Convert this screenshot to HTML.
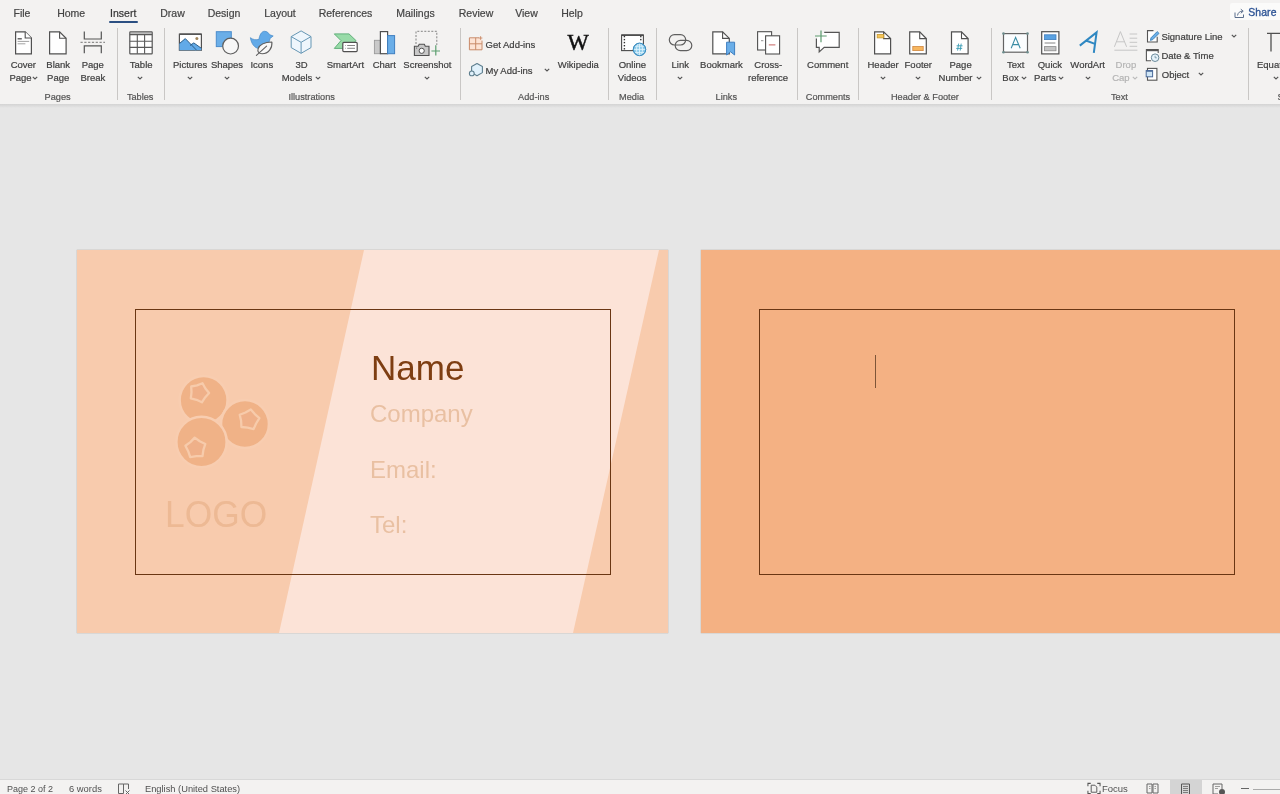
<!DOCTYPE html>
<html><head><meta charset="utf-8">
<style>
*{margin:0;padding:0;box-sizing:border-box}
html,body{width:1280px;height:794px;overflow:hidden;background:#e6e6e6;font-family:"Liberation Sans",sans-serif;color:#444}
.a{position:absolute}
.t{position:absolute;line-height:12px;text-align:center;white-space:nowrap;-webkit-text-stroke:0.2px currentColor}
.tl{position:absolute;line-height:12px;white-space:nowrap;-webkit-text-stroke:0.2px currentColor}
#ribbon{position:absolute;left:0;top:0;width:1280px;height:104px;background:#f3f2f1;overflow:hidden;will-change:transform}
#shadow{position:absolute;left:0;top:104px;width:1280px;height:4px;background:linear-gradient(#d3d3d3,#e6e6e6)}
</style></head><body>
<div id="ribbon">
<div class="t" style="left:-38.0px;top:6.86px;width:120px;font-size:10.5px;color:#444;">File</div>
<div class="t" style="left:11.2px;top:6.86px;width:120px;font-size:10.5px;color:#444;">Home</div>
<div class="t" style="left:63.2px;top:6.86px;width:120px;font-size:10.5px;color:#333;">Insert</div>
<div class="t" style="left:112.5px;top:6.86px;width:120px;font-size:10.5px;color:#444;">Draw</div>
<div class="t" style="left:164.0px;top:6.86px;width:120px;font-size:10.5px;color:#444;">Design</div>
<div class="t" style="left:220.0px;top:6.86px;width:120px;font-size:10.5px;color:#444;">Layout</div>
<div class="t" style="left:285.5px;top:6.86px;width:120px;font-size:10.5px;color:#444;">References</div>
<div class="t" style="left:355.5px;top:6.86px;width:120px;font-size:10.5px;color:#444;">Mailings</div>
<div class="t" style="left:416.0px;top:6.86px;width:120px;font-size:10.5px;color:#444;">Review</div>
<div class="t" style="left:466.5px;top:6.86px;width:120px;font-size:10.5px;color:#444;">View</div>
<div class="t" style="left:512.0px;top:6.86px;width:120px;font-size:10.5px;color:#444;">Help</div>
<div class="a" style="left:109px;top:20.5px;width:29px;height:2px;background:#2b4f82;border-radius:1px"></div>
<div class="a" style="left:1230px;top:3px;width:52px;height:17px;background:#fbfbfa;border-radius:2px"></div>
<svg class="a" style="left:1234px;top:8px" width="11" height="10" viewBox="0 0 11 10"><path d="M1 4.5 V9.5 H9.5 V6.5" fill="none" stroke="#5a6e8c" stroke-width="1"/><path d="M3.5 7.5 C4 4.5 6 3.2 8.5 3.2 M6.8 1.2 L9.2 3.2 L6.8 5.2" fill="none" stroke="#5a6e8c" stroke-width="1"/></svg>
<div class="tl" style="left:1248.3px;top:7.00px;font-size:10.4px;color:#2f5596;-webkit-text-stroke:0.35px #2f5596;letter-spacing:0.1px;">Share</div>
<div class="a" style="left:116.5px;top:28px;width:1px;height:72px;background:#c9c7c5"></div>
<div class="a" style="left:164px;top:28px;width:1px;height:72px;background:#c9c7c5"></div>
<div class="a" style="left:460px;top:28px;width:1px;height:72px;background:#c9c7c5"></div>
<div class="a" style="left:608.2px;top:28px;width:1px;height:72px;background:#c9c7c5"></div>
<div class="a" style="left:656px;top:28px;width:1px;height:72px;background:#c9c7c5"></div>
<div class="a" style="left:796.6px;top:28px;width:1px;height:72px;background:#c9c7c5"></div>
<div class="a" style="left:858.4px;top:28px;width:1px;height:72px;background:#c9c7c5"></div>
<div class="a" style="left:991.3px;top:28px;width:1px;height:72px;background:#c9c7c5"></div>
<div class="a" style="left:1248.2px;top:28px;width:1px;height:72px;background:#c9c7c5"></div>
<div class="t" style="left:-36.7px;top:59.01px;width:120px;font-size:9.5px;color:#3e3e3e;">Cover</div>
<div class="t" style="left:-39.5px;top:71.71px;width:120px;font-size:9.5px;color:#3e3e3e;">Page</div>
<svg class="a" style="left:32.3px;top:75.7px" width="6" height="4"><path d="M0.8 0.8 L3 3 L5.2 0.8" fill="none" stroke="#555" stroke-width="1.15"/></svg>
<div class="t" style="left:-1.8px;top:59.01px;width:120px;font-size:9.5px;color:#3e3e3e;">Blank</div>
<div class="t" style="left:-1.8px;top:71.71px;width:120px;font-size:9.5px;color:#3e3e3e;">Page</div>
<div class="t" style="left:32.8px;top:59.01px;width:120px;font-size:9.5px;color:#3e3e3e;">Page</div>
<div class="t" style="left:32.8px;top:71.71px;width:120px;font-size:9.5px;color:#3e3e3e;">Break</div>
<div class="t" style="left:-2.4px;top:91.41px;width:120px;font-size:9.2px;color:#555;">Pages</div>
<div class="t" style="left:81.2px;top:59.01px;width:120px;font-size:9.5px;color:#3e3e3e;">Table</div>
<svg class="a" style="left:137.2px;top:75.5px" width="6" height="4"><path d="M0.8 0.8 L3 3 L5.2 0.8" fill="none" stroke="#555" stroke-width="1.15"/></svg>
<div class="t" style="left:80.2px;top:91.41px;width:120px;font-size:9.2px;color:#555;">Tables</div>
<div class="t" style="left:130.2px;top:59.01px;width:120px;font-size:9.5px;color:#3e3e3e;">Pictures</div>
<svg class="a" style="left:187.1px;top:75.5px" width="6" height="4"><path d="M0.8 0.8 L3 3 L5.2 0.8" fill="none" stroke="#555" stroke-width="1.15"/></svg>
<div class="t" style="left:167.0px;top:59.01px;width:120px;font-size:9.5px;color:#3e3e3e;">Shapes</div>
<svg class="a" style="left:223.7px;top:75.5px" width="6" height="4"><path d="M0.8 0.8 L3 3 L5.2 0.8" fill="none" stroke="#555" stroke-width="1.15"/></svg>
<div class="t" style="left:201.8px;top:59.01px;width:120px;font-size:9.5px;color:#3e3e3e;">Icons</div>
<div class="t" style="left:241.5px;top:59.01px;width:120px;font-size:9.5px;color:#3e3e3e;">3D</div>
<div class="t" style="left:237.0px;top:71.71px;width:120px;font-size:9.5px;color:#3e3e3e;">Models</div>
<svg class="a" style="left:315.3px;top:75.7px" width="6" height="4"><path d="M0.8 0.8 L3 3 L5.2 0.8" fill="none" stroke="#555" stroke-width="1.15"/></svg>
<div class="t" style="left:285.4px;top:59.01px;width:120px;font-size:9.5px;color:#3e3e3e;">SmartArt</div>
<div class="t" style="left:324.3px;top:59.01px;width:120px;font-size:9.5px;color:#3e3e3e;">Chart</div>
<div class="t" style="left:367.4px;top:59.01px;width:120px;font-size:9.5px;color:#3e3e3e;">Screenshot</div>
<svg class="a" style="left:423.9px;top:75.5px" width="6" height="4"><path d="M0.8 0.8 L3 3 L5.2 0.8" fill="none" stroke="#555" stroke-width="1.15"/></svg>
<div class="t" style="left:251.7px;top:91.41px;width:120px;font-size:9.2px;color:#555;">Illustrations</div>
<div class="tl" style="left:485.6px;top:38.61px;font-size:9.5px;color:#3e3e3e;">Get Add-ins</div>
<div class="tl" style="left:485.6px;top:64.51px;font-size:9.5px;color:#3e3e3e;">My Add-ins</div>
<svg class="a" style="left:544.1px;top:68.2px" width="6" height="4"><path d="M0.8 0.8 L3 3 L5.2 0.8" fill="none" stroke="#555" stroke-width="1.15"/></svg>
<div class="t" style="left:518.3px;top:59.21px;width:120px;font-size:9.5px;color:#3e3e3e;">Wikipedia</div>
<div class="t" style="left:473.7px;top:91.41px;width:120px;font-size:9.2px;color:#555;">Add-ins</div>
<div class="t" style="left:572.4px;top:59.01px;width:120px;font-size:9.5px;color:#3e3e3e;">Online</div>
<div class="t" style="left:572.2px;top:71.71px;width:120px;font-size:9.5px;color:#3e3e3e;">Videos</div>
<div class="t" style="left:571.6px;top:91.41px;width:120px;font-size:9.2px;color:#555;">Media</div>
<div class="t" style="left:620.3px;top:59.01px;width:120px;font-size:9.5px;color:#3e3e3e;">Link</div>
<svg class="a" style="left:676.7px;top:75.5px" width="6" height="4"><path d="M0.8 0.8 L3 3 L5.2 0.8" fill="none" stroke="#555" stroke-width="1.15"/></svg>
<div class="t" style="left:661.5px;top:59.01px;width:120px;font-size:9.5px;color:#3e3e3e;">Bookmark</div>
<div class="t" style="left:708.3px;top:59.01px;width:120px;font-size:9.5px;color:#3e3e3e;">Cross-</div>
<div class="t" style="left:708.1px;top:71.71px;width:120px;font-size:9.5px;color:#3e3e3e;">reference</div>
<div class="t" style="left:666.3px;top:91.41px;width:120px;font-size:9.2px;color:#555;">Links</div>
<div class="t" style="left:767.7px;top:59.01px;width:120px;font-size:9.5px;color:#3e3e3e;">Comment</div>
<div class="t" style="left:768.0px;top:91.41px;width:120px;font-size:9.2px;color:#555;">Comments</div>
<div class="t" style="left:823.1px;top:59.01px;width:120px;font-size:9.5px;color:#3e3e3e;">Header</div>
<svg class="a" style="left:879.7px;top:75.5px" width="6" height="4"><path d="M0.8 0.8 L3 3 L5.2 0.8" fill="none" stroke="#555" stroke-width="1.15"/></svg>
<div class="t" style="left:858.3px;top:59.01px;width:120px;font-size:9.5px;color:#3e3e3e;">Footer</div>
<svg class="a" style="left:915px;top:75.5px" width="6" height="4"><path d="M0.8 0.8 L3 3 L5.2 0.8" fill="none" stroke="#555" stroke-width="1.15"/></svg>
<div class="t" style="left:900.6px;top:59.01px;width:120px;font-size:9.5px;color:#3e3e3e;">Page</div>
<div class="t" style="left:895.5px;top:71.71px;width:120px;font-size:9.5px;color:#3e3e3e;">Number</div>
<svg class="a" style="left:975.7px;top:75.7px" width="6" height="4"><path d="M0.8 0.8 L3 3 L5.2 0.8" fill="none" stroke="#555" stroke-width="1.15"/></svg>
<div class="t" style="left:864.9px;top:91.41px;width:120px;font-size:9.2px;color:#555;">Header &amp; Footer</div>
<div class="t" style="left:955.6px;top:59.01px;width:120px;font-size:9.5px;color:#3e3e3e;">Text</div>
<div class="t" style="left:950.5px;top:71.71px;width:120px;font-size:9.5px;color:#3e3e3e;">Box</div>
<svg class="a" style="left:1020.7px;top:75.7px" width="6" height="4"><path d="M0.8 0.8 L3 3 L5.2 0.8" fill="none" stroke="#555" stroke-width="1.15"/></svg>
<div class="t" style="left:989.9px;top:59.01px;width:120px;font-size:9.5px;color:#3e3e3e;">Quick</div>
<div class="t" style="left:985.2px;top:71.71px;width:120px;font-size:9.5px;color:#3e3e3e;">Parts</div>
<svg class="a" style="left:1058.2px;top:75.7px" width="6" height="4"><path d="M0.8 0.8 L3 3 L5.2 0.8" fill="none" stroke="#555" stroke-width="1.15"/></svg>
<div class="t" style="left:1027.7px;top:59.01px;width:120px;font-size:9.5px;color:#3e3e3e;">WordArt</div>
<svg class="a" style="left:1084.5px;top:75.5px" width="6" height="4"><path d="M0.8 0.8 L3 3 L5.2 0.8" fill="none" stroke="#555" stroke-width="1.15"/></svg>
<div class="t" style="left:1065.9px;top:59.01px;width:120px;font-size:9.5px;color:#b4b4b4;">Drop</div>
<div class="t" style="left:1060.9px;top:71.71px;width:120px;font-size:9.5px;color:#b4b4b4;">Cap</div>
<svg class="a" style="left:1132px;top:75.7px" width="6" height="4"><path d="M0.8 0.8 L3 3 L5.2 0.8" fill="none" stroke="#bbb" stroke-width="1.15"/></svg>
<div class="tl" style="left:1161.4px;top:30.61px;font-size:9.5px;color:#3e3e3e;">Signature Line</div>
<svg class="a" style="left:1231.1px;top:34.3px" width="6" height="4"><path d="M0.8 0.8 L3 3 L5.2 0.8" fill="none" stroke="#555" stroke-width="1.15"/></svg>
<div class="tl" style="left:1161.4px;top:49.91px;font-size:9.5px;color:#3e3e3e;">Date &amp; Time</div>
<div class="tl" style="left:1161.8px;top:69.41px;font-size:9.5px;color:#3e3e3e;">Object</div>
<svg class="a" style="left:1198px;top:72.3px" width="6" height="4"><path d="M0.8 0.8 L3 3 L5.2 0.8" fill="none" stroke="#555" stroke-width="1.15"/></svg>
<div class="t" style="left:1059.4px;top:91.41px;width:120px;font-size:9.2px;color:#555;">Text</div>
<div class="tl" style="left:1257.0px;top:59.01px;font-size:9.5px;color:#3e3e3e;">Equat</div>
<svg class="a" style="left:1273px;top:75.7px" width="6" height="4"><path d="M0.8 0.8 L3 3 L5.2 0.8" fill="none" stroke="#555" stroke-width="1.15"/></svg>
<div class="tl" style="left:1277.5px;top:91.41px;font-size:9.2px;color:#555;">S</div>
<svg class="a" style="left:0;top:0" width="1280" height="104" viewBox="0 0 1280 104">
<g fill="none" stroke-linejoin="miter" stroke-linecap="butt">
<!-- Cover page -->
<path d="M15.6 31.8 H25.2 L31.4 38 V53.8 H15.6 Z" fill="#fff" stroke="#505050" stroke-width="1.2"/>
<path d="M25.2 31.8 V38 H31.4" fill="#fff" stroke="#505050" stroke-width="1.1"/>
<path d="M17.6 38.8 H21.8" stroke="#505050" stroke-width="1.3"/>
<path d="M17.6 41.4 H29.2" stroke="#8a8a8a" stroke-width="0.8"/>
<path d="M17.6 43.8 H25.4" stroke="#8a8a8a" stroke-width="0.8"/>
<!-- Blank page -->
<path d="M49.6 31.8 H59.6 L66.1 38.3 V53.8 H49.6 Z" fill="#fff" stroke="#505050" stroke-width="1.2"/>
<path d="M59.6 31.8 V38.3 H66.1" stroke="#505050" stroke-width="1.1"/>
<!-- Page break -->
<path d="M84.3 31.5 V39 H101.3 V31.5" stroke="#555" stroke-width="1.2"/>
<path d="M84.3 53.2 V45.8 H101.3 V53.2" stroke="#555" stroke-width="1.2"/>
<path d="M80.5 42.3 H105" stroke="#666" stroke-width="0.9" stroke-dasharray="2.2 1.6" stroke-linecap="butt"/>
<!-- Table -->
<rect x="129.8" y="31.8" width="22.4" height="22" rx="0.6" fill="#fff" stroke="#555" stroke-width="1.2"/>
<path d="M129.8 34.6 H152.2 M137.3 34.6 V53.8 M144.6 34.6 V53.8 M129.8 41.3 H152.2 M129.8 47.4 H152.2" stroke="#595959" stroke-width="1.1"/>
<path d="M130 33.2 H152" stroke="#888" stroke-width="0.8"/>
<!-- Pictures -->
<rect x="179.4" y="34.2" width="22" height="16" fill="#fff" stroke="#505050" stroke-width="1.2"/>
<path d="M179.4 43.6 L185.3 38.6 L196.2 50.2 H179.4 Z" fill="#62aae8" stroke="none"/>
<path d="M189.5 44.5 L193.8 42.9 L201.4 48.2 V50.2 H195 Z" fill="#62aae8" stroke="none"/>
<path d="M179.4 43.6 L185.3 38.6 L196.4 50 M190 45.5 L193.8 42.9 L201.2 48.2" stroke="#2d5f8a" stroke-width="1"/>
<circle cx="196.9" cy="38.4" r="1.5" fill="#a0845a" stroke="none"/>
<path d="M179.4 34.2 H201.4" stroke="#555" stroke-width="1.6"/>
<!-- Shapes -->
<rect x="216.3" y="31.7" width="15" height="14.9" fill="#6aaee8" stroke="#4a8ccc" stroke-width="1"/>
<circle cx="230.6" cy="46.1" r="7.9" fill="#f7f7f7" stroke="#5f5f5f" stroke-width="1.2"/>
<!-- Icons (bird + leaf) -->
<path d="M250.4 37.7 C253 39.8 256.5 40.3 259 39.3 C259.4 35.5 261.5 31.3 264.4 31.3 C267.2 31.3 268.8 33 269.3 34.6 L273.2 36 L270 38.4 C269.8 40 269.5 41 269 42 L259 48.5 C254.5 48 251.5 44 250.4 37.7 Z" fill="#62aae8" stroke="#4f8fca" stroke-width="0.8" stroke-linejoin="round"/>
<path d="M271.9 42 C272.5 48 268.5 53.8 262.2 53.8 C258.6 53.8 257.2 51.5 258.2 48.5 C259.6 44.6 265 42.3 271.9 42 Z" fill="#f8f8f8" stroke="#5f5f5f" stroke-width="1.1" stroke-linejoin="round"/>
<path d="M256.4 55.4 L266.6 46.2" stroke="#5f5f5f" stroke-width="1.1" stroke-linecap="round"/>
<!-- 3D Models -->
<path d="M301.1 30.9 L311 36.6 V47.6 L301.1 53.3 L291.2 47.6 V36.6 Z" fill="#eef6fc" stroke="#6596b4" stroke-width="1" stroke-linejoin="round"/>
<path d="M291.2 36.6 L301.1 42.3 L311 36.6 M301.1 42.3 V53.3" stroke="#6596b4" stroke-width="1" stroke-linejoin="round"/>
<!-- SmartArt -->
<path d="M334.3 33.9 H349 L356 40.6 L349 48.4 H334.3 L341 40.6 Z" fill="#98dba8" stroke="#62b07a" stroke-width="1"/>
<rect x="342.8" y="42.4" width="14.4" height="9.2" rx="1" fill="#fff" stroke="#505050" stroke-width="1.2"/>
<path d="M347.2 45.5 H355 M347.2 48.3 H355" stroke="#777" stroke-width="0.9"/>
<path d="M345 45.5 H345.6 M345 48.3 H345.6" stroke="#777" stroke-width="0.9"/>
<!-- Chart -->
<rect x="374.4" y="40.3" width="6" height="13.4" fill="#c9c9c9" stroke="#9a9a9a" stroke-width="0.9"/>
<rect x="380.4" y="31.6" width="7.2" height="22.1" fill="#fff" stroke="#505050" stroke-width="1.2"/>
<rect x="387.6" y="35.6" width="7" height="18.1" fill="#6aaee8" stroke="#3f7fc0" stroke-width="1"/>
<!-- Screenshot -->
<path d="M416 44 V31.3 H436.8 V45" stroke="#777" stroke-width="0.9" stroke-dasharray="2 1.5" stroke-linecap="butt"/>
<path d="M414.4 46.2 H418.2 L419.2 44.3 H424.3 L425.3 46.2 H429 V55.5 H414.4 Z" fill="#c8c8c8" stroke="#505050" stroke-width="1.1"/>
<circle cx="421.7" cy="50.8" r="2.6" fill="#fff" stroke="#505050" stroke-width="1"/>
<circle cx="416.6" cy="48" r="0.6" fill="#505050" stroke="none"/>
<path d="M435.8 45.2 V55.6 M431.4 51 H440" stroke="#5a9e6e" stroke-width="1.2"/>
<!-- Get Add-ins -->
<rect x="469.6" y="38.2" width="12" height="11.6" fill="#fde3d4" stroke="none"/>
<path d="M479 37.8 H469.4 V49.8 H482 V40.6 M469.4 43.8 H482 M475.7 37.8 V49.8" stroke="#c98a68" stroke-width="1"/>
<path d="M480.6 36.2 V39.8 M478.8 38 H482.4" stroke="#c98a68" stroke-width="0.9"/>
<!-- My Add-ins -->
<path d="M477 63.6 L482.4 66.6 V72.6 L477 75.8 L471.6 72.6 V66.6 Z" fill="#e1f1fb" stroke="#5e7e8e" stroke-width="1.1" stroke-linejoin="round"/>
<circle cx="471.8" cy="73.4" r="2.4" fill="#e1f1fb" stroke="#5e7e8e" stroke-width="1.1"/>
<!-- Online Videos -->
<rect x="621.6" y="35" width="21.8" height="15.6" fill="#fff" stroke="#4a4a4a" stroke-width="1.1"/>
<path d="M621.6 35.2 H643.4" stroke="#4a4a4a" stroke-width="1.5"/>
<rect x="623.6999999999999" y="35.9" width="1.4" height="1.4" fill="#333" stroke="none"/><rect x="623.6999999999999" y="38.9" width="1.4" height="1.4" fill="#333" stroke="none"/><rect x="623.6999999999999" y="41.9" width="1.4" height="1.4" fill="#333" stroke="none"/><rect x="623.6999999999999" y="45.0" width="1.4" height="1.4" fill="#333" stroke="none"/><rect x="623.6999999999999" y="48.099999999999994" width="1.4" height="1.4" fill="#333" stroke="none"/><rect x="640.0999999999999" y="35.9" width="1.4" height="1.4" fill="#333" stroke="none"/><rect x="640.0999999999999" y="38.9" width="1.4" height="1.4" fill="#333" stroke="none"/>
<circle cx="639.5" cy="49.4" r="6.2" fill="#8ccbea" stroke="#3d8fc2" stroke-width="1"/>
<path d="M633.6 49.4 H645.4 M639.5 43.4 V55.4 M634.6 46.2 H644.4 M634.6 52.6 H644.4" stroke="#dff2fc" stroke-width="0.9"/>
<ellipse cx="639.5" cy="49.4" rx="3" ry="6" stroke="#dff2fc" stroke-width="0.9"/>
<circle cx="639.5" cy="49.4" r="6.2" stroke="#3d8fc2" stroke-width="1"/>
<!-- Link -->
<rect x="669.3" y="34.6" width="16.4" height="10.4" rx="5.2" stroke="#5f5f5f" stroke-width="1.2"/>
<rect x="675.2" y="40.3" width="16.6" height="10.4" rx="5.2" stroke="#5f5f5f" stroke-width="1.2"/>
<!-- Bookmark -->
<path d="M712.8 31.8 H722.6 L729.3 38.4 V53.8 H712.8 Z" fill="#fff" stroke="#505050" stroke-width="1.2"/>
<path d="M722.6 31.8 V38.4 H729.3" stroke="#505050" stroke-width="1.1"/>
<path d="M726.6 42.2 H734.6 V55 L730.6 51.8 L726.6 55 Z" fill="#6aaee8" stroke="#3f7fc0" stroke-width="1"/>
<!-- Cross-reference -->
<rect x="757.6" y="31.7" width="14" height="18.3" fill="#fff" stroke="#505050" stroke-width="1.1"/>
<rect x="765.6" y="35.8" width="14" height="18.2" fill="#fff" stroke="#505050" stroke-width="1.1"/>
<path d="M761 40.7 H763.4" stroke="#777" stroke-width="0.8"/>
<path d="M768.8 44.9 H775.4" stroke="#c0504d" stroke-width="0.9"/>
<!-- Comment -->
<path d="M824.2 32.4 H839.2 V47.4 H824.2 L819.2 52 V47.4 H816.4 V38.5" fill="#fff" stroke="#555" stroke-width="1.2"/>
<path d="M821 30.4 V42.3 M815 36 H826.7" stroke="#5e9c70" stroke-width="1.2"/>
<!-- Header -->
<path d="M874.6 31.8 H883.6 L890.6 38.6 V53.8 H874.6 Z" fill="#fff" stroke="#505050" stroke-width="1.2"/>
<path d="M883.6 31.8 V38.6 H890.6" stroke="#505050" stroke-width="1.1"/>
<rect x="877.2" y="34.4" width="6.6" height="3.5" fill="#f6c65a" stroke="#c89a30" stroke-width="0.8"/>
<!-- Footer -->
<path d="M909.7 31.8 H919.7 L926.3 38.6 V53.8 H909.7 Z" fill="#fff" stroke="#505050" stroke-width="1.2"/>
<path d="M919.7 31.8 V38.6 H926.3" stroke="#505050" stroke-width="1.1"/>
<rect x="912.8" y="46.5" width="10.4" height="4.1" fill="#f7b65e" stroke="#d08840" stroke-width="0.8"/>
<!-- Page Number -->
<path d="M951.5 31.8 H961.5 L968.1 38.6 V53.8 H951.5 Z" fill="#fff" stroke="#505050" stroke-width="1.2"/>
<path d="M961.5 31.8 V38.6 H968.1" stroke="#505050" stroke-width="1.1"/>
<path d="M958.6 43.6 L957.6 50.6 M961.2 43.6 L960.2 50.6 M956.6 45.8 H962.6 M956.2 48.4 H962.2" stroke="#3a9cb4" stroke-width="0.9"/>
<!-- Text Box -->
<rect x="1003.5" y="33.6" width="24" height="18.6" fill="#fbfdfe" stroke="#636363" stroke-width="1.2"/>
<circle cx="1003.5" cy="33.6" r="1.3" fill="#6d8d8d" stroke="none"/>
<circle cx="1027.5" cy="33.6" r="1.3" fill="#6d8d8d" stroke="none"/>
<circle cx="1003.5" cy="52.2" r="1.3" fill="#6d8d8d" stroke="none"/>
<circle cx="1027.5" cy="52.2" r="1.3" fill="#6d8d8d" stroke="none"/>
<path d="M1011.2 48.3 L1015.6 37.4 L1020.2 48.3 M1012.8 44.6 H1018.6" stroke="#3a8ca4" stroke-width="1.1"/>
<!-- Quick Parts -->
<rect x="1041.7" y="31.7" width="17.2" height="22.2" fill="#fff" stroke="#505050" stroke-width="1.2"/>
<rect x="1044.6" y="34.8" width="11.4" height="4.8" fill="#5aa2e2" stroke="#3f7fc0" stroke-width="0.8"/>
<path d="M1044.6 43 H1055.4" stroke="#777" stroke-width="0.9"/>
<rect x="1044.6" y="46.6" width="11.4" height="4.2" fill="#c4c4c4" stroke="#8a8a8a" stroke-width="0.8"/>
<!-- WordArt -->
<path d="M1079.8 45.6 L1096.6 32.4 L1093.8 52.8 M1086.6 40.8 L1094.2 43.6" stroke="#2f88c2" stroke-width="2"/>
<!-- Drop Cap -->
<path d="M1114.4 46.8 L1120.4 31.6 L1126.6 46.8 M1116.4 41.8 H1124.6" stroke="#c6c6c6" stroke-width="1"/>
<path d="M1129.6 34 H1137.2 M1129.6 38.2 H1137.2 M1129.6 42.3 H1137.2 M1129.6 46.3 H1137.2 M1114.4 50.2 H1137.4" stroke="#c6c6c6" stroke-width="1"/>
<!-- Signature line -->
<path d="M1157.2 36.8 V42 H1147.5 V30.6 H1153.5" fill="#fff" stroke="#555" stroke-width="1.1"/>
<path d="M1150.4 40.4 L1151 37.8 L1157.2 31.6 L1159 33.4 L1152.8 39.6 Z" fill="#6aaee8" stroke="#3d82b8" stroke-width="0.9"/>
<!-- Date & Time -->
<path d="M1151 60.8 H1146.4 V49.6 H1158.2 V53" fill="#fff" stroke="#555" stroke-width="1.1"/>
<path d="M1146.4 50.4 H1158.2" stroke="#555" stroke-width="1.6"/>
<circle cx="1155.1" cy="57.7" r="3.8" fill="#e6f3fb" stroke="#6a8a9a" stroke-width="1"/>
<path d="M1155.1 55.8 V57.8 H1156.8" stroke="#6a8a9a" stroke-width="0.8"/>
<!-- Object -->
<rect x="1147.5" y="68.4" width="9.4" height="11.8" fill="#fff" stroke="#555" stroke-width="1.1"/>
<rect x="1146.2" y="70.6" width="6.4" height="6.2" fill="#d0e6f6" stroke="#4a6a9a" stroke-width="1"/>
<path d="M1146.2 71 H1152.6" stroke="#4a6a9a" stroke-width="1.5"/>
<!-- Equation (pi) -->
<path d="M1267 33.4 H1282 M1271 33.4 V51.6" stroke="#505050" stroke-width="1.3"/>
</g>
<!-- Wikipedia W -->
<text x="578.2" y="49.8" text-anchor="middle" font-family="Liberation Serif" font-size="22.5" fill="#111" stroke="#111" stroke-width="0.5">W</text>
</svg>

</div>
<div id="shadow"></div>
<div id="page1" class="a" style="left:77px;top:250px;width:591px;height:383px;background:#f8cbad;overflow:hidden;box-shadow:0 0 1px rgba(90,60,40,0.5);will-change:transform">
  <svg class="a" style="left:0;top:0" width="591" height="383"><polygon points="287,0 582,0 496,383 202,383" fill="#fce3d7"/></svg>
  <div class="a" style="left:58px;top:59px;width:476px;height:266px;border:1px solid #6a3613"></div>
  <svg class="a" style="left:0;top:0" width="591" height="383" viewBox="77 250 591 383">
    <g stroke="#f8cdb0" stroke-width="2.6">
      <circle cx="203.6" cy="400" r="24" fill="#f0b287"/>
      <circle cx="245" cy="424" r="24" fill="#f0b287"/>
      <circle cx="201.5" cy="442" r="25.2" fill="#f0b287"/>
    </g>
    <g fill="#efb089" stroke="#f7cbab" stroke-width="2.3" stroke-linejoin="round">
      <polygon points="202.5,383.3 205.4,388.5 209.1,393.0 205.1,397.4 201.9,402.3 196.5,399.8 190.8,398.3 191.5,392.4 191.2,386.5 197.0,385.4"/>
      <polygon points="250.8,409.4 254.8,414.1 259.4,418.2 256.1,423.5 253.6,429.1 247.6,427.6 241.4,427.0 241.1,420.8 239.7,414.8 245.5,412.5"/>
      <polygon points="194.7,437.6 199.7,441.2 205.3,444.0 203.4,449.9 202.5,456.0 196.3,456.1 190.2,457.1 188.2,451.2 185.4,445.7 190.4,442.1"/>
    </g>
  </svg>
  <div class="a" style="left:87.5px;top:244px;font-size:37.8px;line-height:40px;color:#edb994;transform:scaleX(0.935);transform-origin:0 0;white-space:nowrap">LOGO</div>
  <div class="a" style="left:294px;top:97.5px;font-size:35px;line-height:40px;color:#7e3e12;transform:scaleX(1.0);transform-origin:0 0;white-space:nowrap">Name</div>
  <div class="a" style="left:293px;top:149.5px;font-size:24px;line-height:28px;color:#e9c0a2;white-space:nowrap">Company</div>
  <div class="a" style="left:293px;top:205.5px;font-size:24px;line-height:28px;color:#e9c0a2;white-space:nowrap">Email:</div>
  <div class="a" style="left:293px;top:260.5px;font-size:24px;line-height:28px;color:#e9c0a2;white-space:nowrap">Tel:</div>
</div>
<div id="page2" class="a" style="left:701px;top:250px;width:600px;height:383px;background:#f4b183;overflow:hidden;box-shadow:0 0 1px rgba(90,60,40,0.5);will-change:transform">
  <div class="a" style="left:58px;top:59px;width:476px;height:266px;border:1px solid #6a3613"></div>
  <div class="a" style="left:174px;top:105px;width:1px;height:33px;background:#7d5538"></div>
</div>

<div id="status" class="a" style="left:0;top:779px;width:1280px;height:15px;background:#f3f2f1;border-top:1px solid #d8d8d8;will-change:transform">
  <div class="a" style="left:7px;top:3px;font-size:9px;line-height:12px;color:#505050;white-space:nowrap">Page 2 of 2</div>
  <div class="a" style="left:69px;top:3px;font-size:9.4px;line-height:12px;color:#505050;white-space:nowrap">6 words</div>
  <svg class="a" style="left:117px;top:3px" width="15" height="12" viewBox="0 0 15 12"><path d="M1.5 1 H6.5 V10.5 H1.5 Z M6.5 1 H11.5 V6" fill="none" stroke="#666" stroke-width="1"/><path d="M8.5 7.5 L12.5 11.5 M12.5 7.5 L8.5 11.5" stroke="#666" stroke-width="1"/></svg>
  <div class="a" style="left:145px;top:3px;font-size:9.3px;line-height:12px;color:#505050;white-space:nowrap">English (United States)</div>
  <svg class="a" style="left:1087px;top:2px" width="14" height="13" viewBox="0 0 15 13"><path d="M1 4 V1 H4 M11 1 H14 V4 M14 9 V12 H11 M4 12 H1 V9" fill="none" stroke="#555" stroke-width="1.1"/><path d="M4.5 3 H8.5 L10.5 5 V10.5 H4.5 Z" fill="none" stroke="#555" stroke-width="1"/></svg>
  <div class="a" style="left:1102px;top:3px;font-size:9.5px;line-height:12px;color:#505050;white-space:nowrap">Focus</div>
  <svg class="a" style="left:1146px;top:3px" width="13" height="11" viewBox="0 0 13 11"><path d="M1 1 H6 V10 H1 Z M7 1 H12 V10 H7 Z" fill="none" stroke="#666" stroke-width="1"/><path d="M3 3.5 H4.5 M3 5.5 H4.5 M8.5 3.5 H10 M8.5 5.5 H10" stroke="#888" stroke-width="0.8"/></svg>
  <div class="a" style="left:1170px;top:0px;width:32px;height:15px;background:#d4d4d4"></div>
  <svg class="a" style="left:1180px;top:3px" width="11" height="12" viewBox="0 0 11 12"><path d="M1.5 1 H9.5 V12 H1.5 Z" fill="none" stroke="#555" stroke-width="1"/><path d="M3 3.5 H8 M3 5.5 H8 M3 7.5 H8 M3 9.5 H8" stroke="#666" stroke-width="0.8"/></svg>
  <svg class="a" style="left:1212px;top:3px" width="14" height="12" viewBox="0 0 14 12"><path d="M1 1 H10 V6 M1 1 V11 H6" fill="none" stroke="#666" stroke-width="1"/><path d="M3 3.5 H8 M3 5.5 H6" stroke="#888" stroke-width="0.8"/><circle cx="10" cy="9" r="3" fill="#555"/></svg>
  <div class="a" style="left:1241px;top:8px;width:8px;height:1px;background:#666"></div>
  <div class="a" style="left:1253px;top:9px;width:30px;height:1px;background:#aaa"></div>
</div>

</body></html>
